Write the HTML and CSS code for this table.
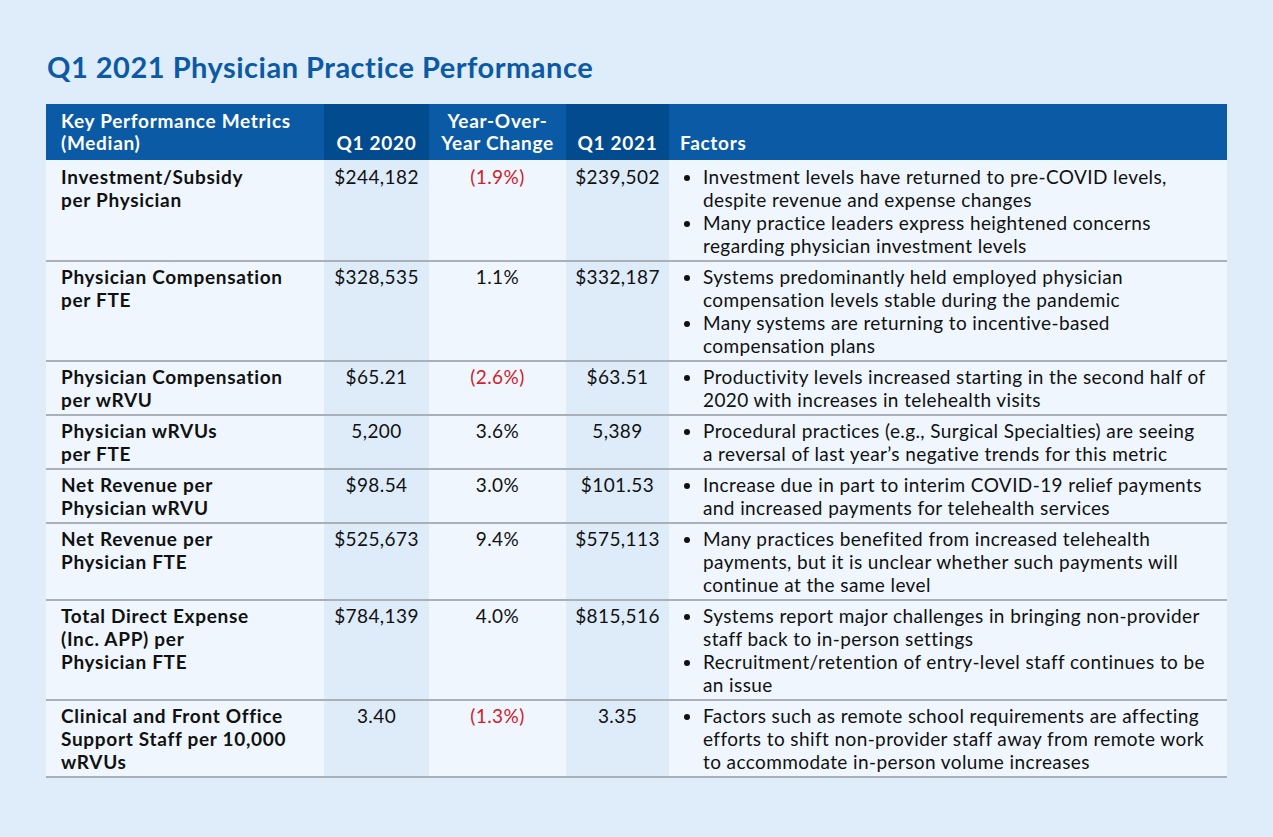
FILE: index.html
```html
<!DOCTYPE html>
<html lang="en">
<head>
<meta charset="utf-8">
<title>Q1 2021 Physician Practice Performance</title>
<link rel="stylesheet" href="styles.css">
</head>
<body>
<main class="page">
  <h1 class="title">Q1 2021 Physician Practice Performance</h1>
  <table class="kpi">
    <colgroup>
      <col class="c-metric">
      <col class="c-q20">
      <col class="c-yoy">
      <col class="c-q21">
      <col class="c-factors">
    </colgroup>
    <thead>
      <tr>
        <th class="h-metric">Key Performance Metrics<br>(Median)</th>
        <th class="h-num dark">Q1 2020</th>
        <th class="h-num">Year-Over-<br>Year Change</th>
        <th class="h-num dark">Q1 2021</th>
        <th class="h-factors">Factors</th>
      </tr>
    </thead>
    <tbody>
      <tr>
        <td class="metric">Investment/Subsidy<br>per Physician</td>
        <td class="num dark">$244,182</td>
        <td class="num neg">(1.9%)</td>
        <td class="num dark">$239,502</td>
        <td class="factors"><ul>
          <li>Investment levels have returned to pre-COVID levels,<br>despite revenue and expense changes</li>
          <li>Many practice leaders express heightened concerns<br>regarding physician investment levels</li>
        </ul></td>
      </tr>
      <tr>
        <td class="metric">Physician Compensation<br>per FTE</td>
        <td class="num dark">$328,535</td>
        <td class="num">1.1%</td>
        <td class="num dark">$332,187</td>
        <td class="factors"><ul>
          <li>Systems predominantly held employed physician<br>compensation levels stable during the pandemic</li>
          <li>Many systems are returning to incentive-based<br>compensation plans</li>
        </ul></td>
      </tr>
      <tr>
        <td class="metric">Physician Compensation<br>per wRVU</td>
        <td class="num dark">$65.21</td>
        <td class="num neg">(2.6%)</td>
        <td class="num dark">$63.51</td>
        <td class="factors"><ul>
          <li>Productivity levels increased starting in the second half of<br>2020 with increases in telehealth visits</li>
        </ul></td>
      </tr>
      <tr>
        <td class="metric">Physician wRVUs<br>per FTE</td>
        <td class="num dark">5,200</td>
        <td class="num">3.6%</td>
        <td class="num dark">5,389</td>
        <td class="factors"><ul>
          <li>Procedural practices (e.g., Surgical Specialties) are seeing<br>a reversal of last year’s negative trends for this metric</li>
        </ul></td>
      </tr>
      <tr>
        <td class="metric">Net Revenue per<br>Physician wRVU</td>
        <td class="num dark">$98.54</td>
        <td class="num">3.0%</td>
        <td class="num dark">$101.53</td>
        <td class="factors"><ul>
          <li>Increase due in part to interim COVID-19 relief payments<br>and increased payments for telehealth services</li>
        </ul></td>
      </tr>
      <tr>
        <td class="metric">Net Revenue per<br>Physician FTE</td>
        <td class="num dark">$525,673</td>
        <td class="num">9.4%</td>
        <td class="num dark">$575,113</td>
        <td class="factors"><ul>
          <li>Many practices benefited from increased telehealth<br>payments, but it is unclear whether such payments will<br>continue at the same level</li>
        </ul></td>
      </tr>
      <tr>
        <td class="metric">Total Direct Expense<br>(Inc. APP) per<br>Physician FTE</td>
        <td class="num dark">$784,139</td>
        <td class="num">4.0%</td>
        <td class="num dark">$815,516</td>
        <td class="factors"><ul>
          <li>Systems report major challenges in bringing non-provider<br>staff back to in-person settings</li>
          <li>Recruitment/retention of entry-level staff continues to be<br>an issue</li>
        </ul></td>
      </tr>
      <tr>
        <td class="metric">Clinical and Front Office<br>Support Staff per 10,000<br>wRVUs</td>
        <td class="num dark">3.40</td>
        <td class="num neg">(1.3%)</td>
        <td class="num dark">3.35</td>
        <td class="factors"><ul>
          <li>Factors such as remote school requirements are affecting<br>efforts to shift non-provider staff away from remote work<br>to accommodate in-person volume increases</li>
        </ul></td>
      </tr>
    </tbody>
  </table>
</main>
</body>
</html>
```

FILE: styles.css
```css
html, body {
  margin: 0;
  padding: 0;
}

body {
  background: #dfedfa;
  font-family: Lato, "Open Sans", "Liberation Sans", sans-serif;
  color: #111;
  width: 1273px;
  height: 837px;
  overflow: hidden;
}

.page {
  padding: 49px 46px 0 46px;
}

.title {
  margin: 0 0 19px 1px;
  font-size: 29px;
  line-height: 36px;
  font-weight: 700;
  color: #0c5aa5;
  letter-spacing: 0.5px;
}

.kpi {
  width: 1181px;
  border-collapse: collapse;
  table-layout: fixed;
  font-size: 19px;
  letter-spacing: 0.4px;
}

.c-metric { width: 278px; }
.c-q20 { width: 105px; }
.c-yoy { width: 137px; }
.c-q21 { width: 103px; }
.c-factors { width: 558px; }

.kpi thead th {
  background: #0a5aa6;
  color: #fff;
  font-weight: 700;
  letter-spacing: 0.7px;
  line-height: 22px;
  height: 56px;
  box-sizing: border-box;
  padding: 4px 0 6px 0;
  vertical-align: bottom;
  text-align: left;
  white-space: nowrap;
}

.kpi thead th.dark {
  background: #024b8e;
}

.kpi thead .h-metric { padding-left: 15px; }
.kpi thead .h-num { text-align: center; }
.kpi thead .h-factors { padding-left: 11px; }

.kpi tbody td {
  background: #eff6fd;
  line-height: 23px;
  padding: 3px 0 3px 0;
  vertical-align: top;
  border-bottom: 2px solid #a9b0b7;
  white-space: nowrap;
}

.kpi tbody tr:first-child td {
  padding-top: 5px;
}

.kpi tbody td.dark {
  background: #deecfa;
}

.kpi tbody .metric {
  font-weight: 700;
  letter-spacing: 0.7px;
  padding-left: 15px;
}

.kpi tbody .num {
  text-align: center;
}

.kpi tbody .neg {
  color: #d0202a;
}

.factors ul {
  list-style: none;
  margin: 0;
  padding: 0 0 0 34px;
}

.factors li {
  position: relative;
}

.factors li::before {
  content: "";
  position: absolute;
  left: -19px;
  top: 10px;
  width: 6px;
  height: 6px;
  border-radius: 50%;
  background: #111;
}
```
